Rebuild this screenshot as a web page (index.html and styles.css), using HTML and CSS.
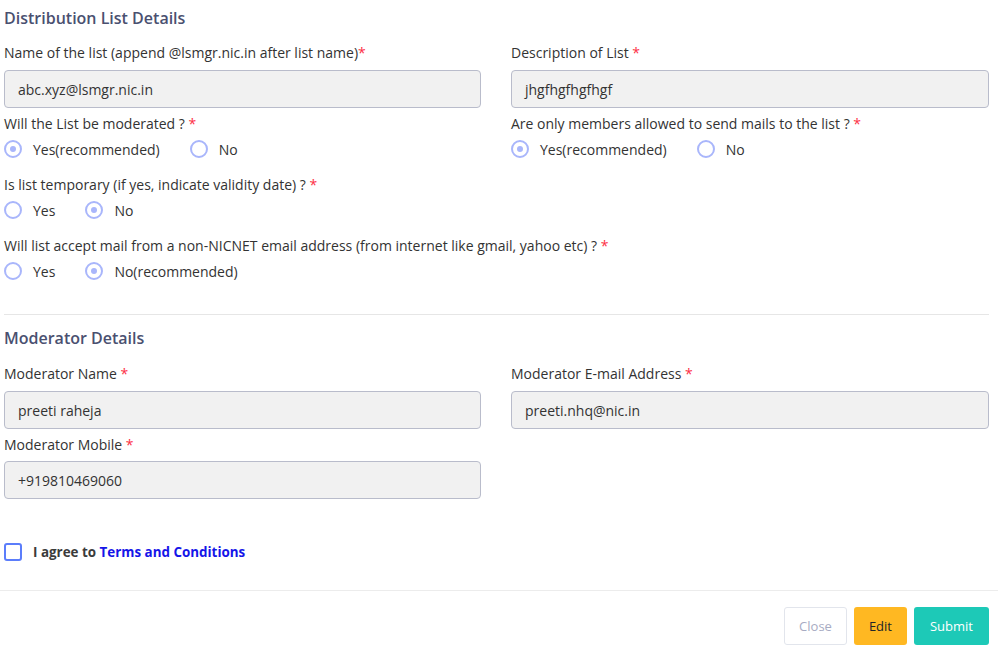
FILE: index.html
```html
<!DOCTYPE html>
<html lang="en">
<head>
<meta charset="utf-8">
<title>Distribution List Details</title>
<link rel="stylesheet" href="styles.css">
</head>
<body>
<div class="page">
  <h3 class="section-title">Distribution List Details</h3>
  <div class="grid">
    <div class="field">
      <label class="label">Name of the list (append @lsmgr.nic.in after list name)<span class="req">*</span></label>
      <div class="input">abc.xyz@lsmgr.nic.in</div>
    </div>
    <div class="field">
      <label class="label">Description of List <span class="req">*</span></label>
      <div class="input">jhgfhgfhgfhgf</div>
    </div>
    <div class="question">
      <div class="label">Will the List be moderated ? <span class="req">*</span></div>
      <div class="radios">
        <span class="radio checked"></span><span class="opt">Yes(recommended)</span>
        <span class="radio"></span><span class="opt">No</span>
      </div>
    </div>
    <div class="question">
      <div class="label">Are only members allowed to send mails to the list ? <span class="req">*</span></div>
      <div class="radios">
        <span class="radio checked"></span><span class="opt">Yes(recommended)</span>
        <span class="radio"></span><span class="opt">No</span>
      </div>
    </div>
  </div>
  <div class="question single">
    <div class="label">Is list temporary (if yes, indicate validity date) ? <span class="req">*</span></div>
    <div class="radios">
      <span class="radio"></span><span class="opt">Yes</span>
      <span class="radio checked"></span><span class="opt">No</span>
    </div>
  </div>
  <div class="question single">
    <div class="label">Will list accept mail from a non-NICNET email address (from internet like gmail, yahoo etc) ? <span class="req">*</span></div>
    <div class="radios">
      <span class="radio"></span><span class="opt">Yes</span>
      <span class="radio checked"></span><span class="opt">No(recommended)</span>
    </div>
  </div>

  <hr class="sep">

  <h3 class="section-title second">Moderator Details</h3>
  <div class="grid">
    <div class="field">
      <label class="label">Moderator Name <span class="req">*</span></label>
      <div class="input">preeti raheja</div>
    </div>
    <div class="field">
      <label class="label">Moderator E-mail Address <span class="req">*</span></label>
      <div class="input">preeti.nhq@nic.in</div>
    </div>
    <div class="field">
      <label class="label short">Moderator Mobile <span class="req">*</span></label>
      <div class="input">+919810469060</div>
    </div>
  </div>

  <div class="agree">
    <span class="checkbox"></span>
    <span class="agree-text">I agree to <a class="terms" href="#">Terms and Conditions</a></span>
  </div>
</div>
<div class="footer">
  <button class="btn btn-close">Close</button>
  <button class="btn btn-edit">Edit</button>
  <button class="btn btn-submit">Submit</button>
</div>
</body>
</html>
```
FILE: styles.css
```css
html, body {
  margin: 0;
  padding: 0;
  background: #fff;
}
body {
  font-family: "Open Sans", "Liberation Sans", sans-serif;
  font-size: 14px;
  color: #333;
}
.page {
  padding: 6px 9px 0 4px;
}
.section-title {
  margin: 0 0 13px;
  font-size: 16px;
  line-height: 24px;
  font-weight: 600;
  color: #4a5070;
}
.section-title.second {
  margin-top: 11px;
  margin-bottom: 14px;
}
.grid {
  display: grid;
  grid-template-columns: 477px 478px;
  column-gap: 30px;
  row-gap: 6px;
}
.label {
  display: block;
  line-height: 20px;
  color: #333;
}
.field .label {
  margin-bottom: 7px;
}
.field .label.short {
  margin-bottom: 6px;
}
.req {
  color: #fd2f45;
}
.input {
  box-sizing: border-box;
  height: 38px;
  padding: 0 13px;
  display: flex;
  align-items: center;
  background: #f1f1f1;
  border: 1px solid #b9bccb;
  border-radius: 4px;
  color: #333;
}
.question .radios {
  margin-top: 5px;
}
.question.single {
  margin-top: 16px;
}
.radios {
  display: flex;
  align-items: center;
  height: 20px;
}
.radio {
  box-sizing: border-box;
  width: 18px;
  height: 18px;
  border: 2px solid #a9b6fb;
  border-radius: 50%;
  display: flex;
  align-items: center;
  justify-content: center;
  margin-right: 11px;
}
.radio.checked::after {
  content: "";
  width: 6px;
  height: 6px;
  border-radius: 50%;
  background: #a9b6fb;
}
.opt {
  margin-right: 30px;
  color: #333;
}
.sep {
  margin: 33px 0 0;
  border: 0;
  border-top: 1px solid #e6e6e6;
}
.agree {
  margin-top: 43px;
  display: flex;
  align-items: center;
  height: 20px;
}
.checkbox {
  box-sizing: border-box;
  width: 18px;
  height: 18px;
  border: 2px solid #5b7dfb;
  border-radius: 3px;
  margin-right: 11px;
}
.agree-text {
  font-size: 13.4px;
  font-weight: 700;
  color: #3b3b3b;
}
.terms {
  color: #1515e8;
  text-decoration: none;
}
.footer {
  margin-top: 28px;
  border-top: 1px solid #ececec;
  padding: 16px 9px 0 0;
  display: flex;
  justify-content: flex-end;
  gap: 7px;
}
.btn {
  height: 38px;
  padding: 0 15px;
  font-family: inherit;
  font-size: 13px;
  border-radius: 3px;
  border: 1px solid transparent;
}
.btn-close {
  background: #fff;
  border-color: #e2e5ec;
  color: #a7abc3;
  padding: 0 14px;
}
.btn-edit {
  background: #ffb822;
  color: #212529;
  padding: 0 14px;
}
.btn-submit {
  background: #1dc9b7;
  color: #fff;
}
```
